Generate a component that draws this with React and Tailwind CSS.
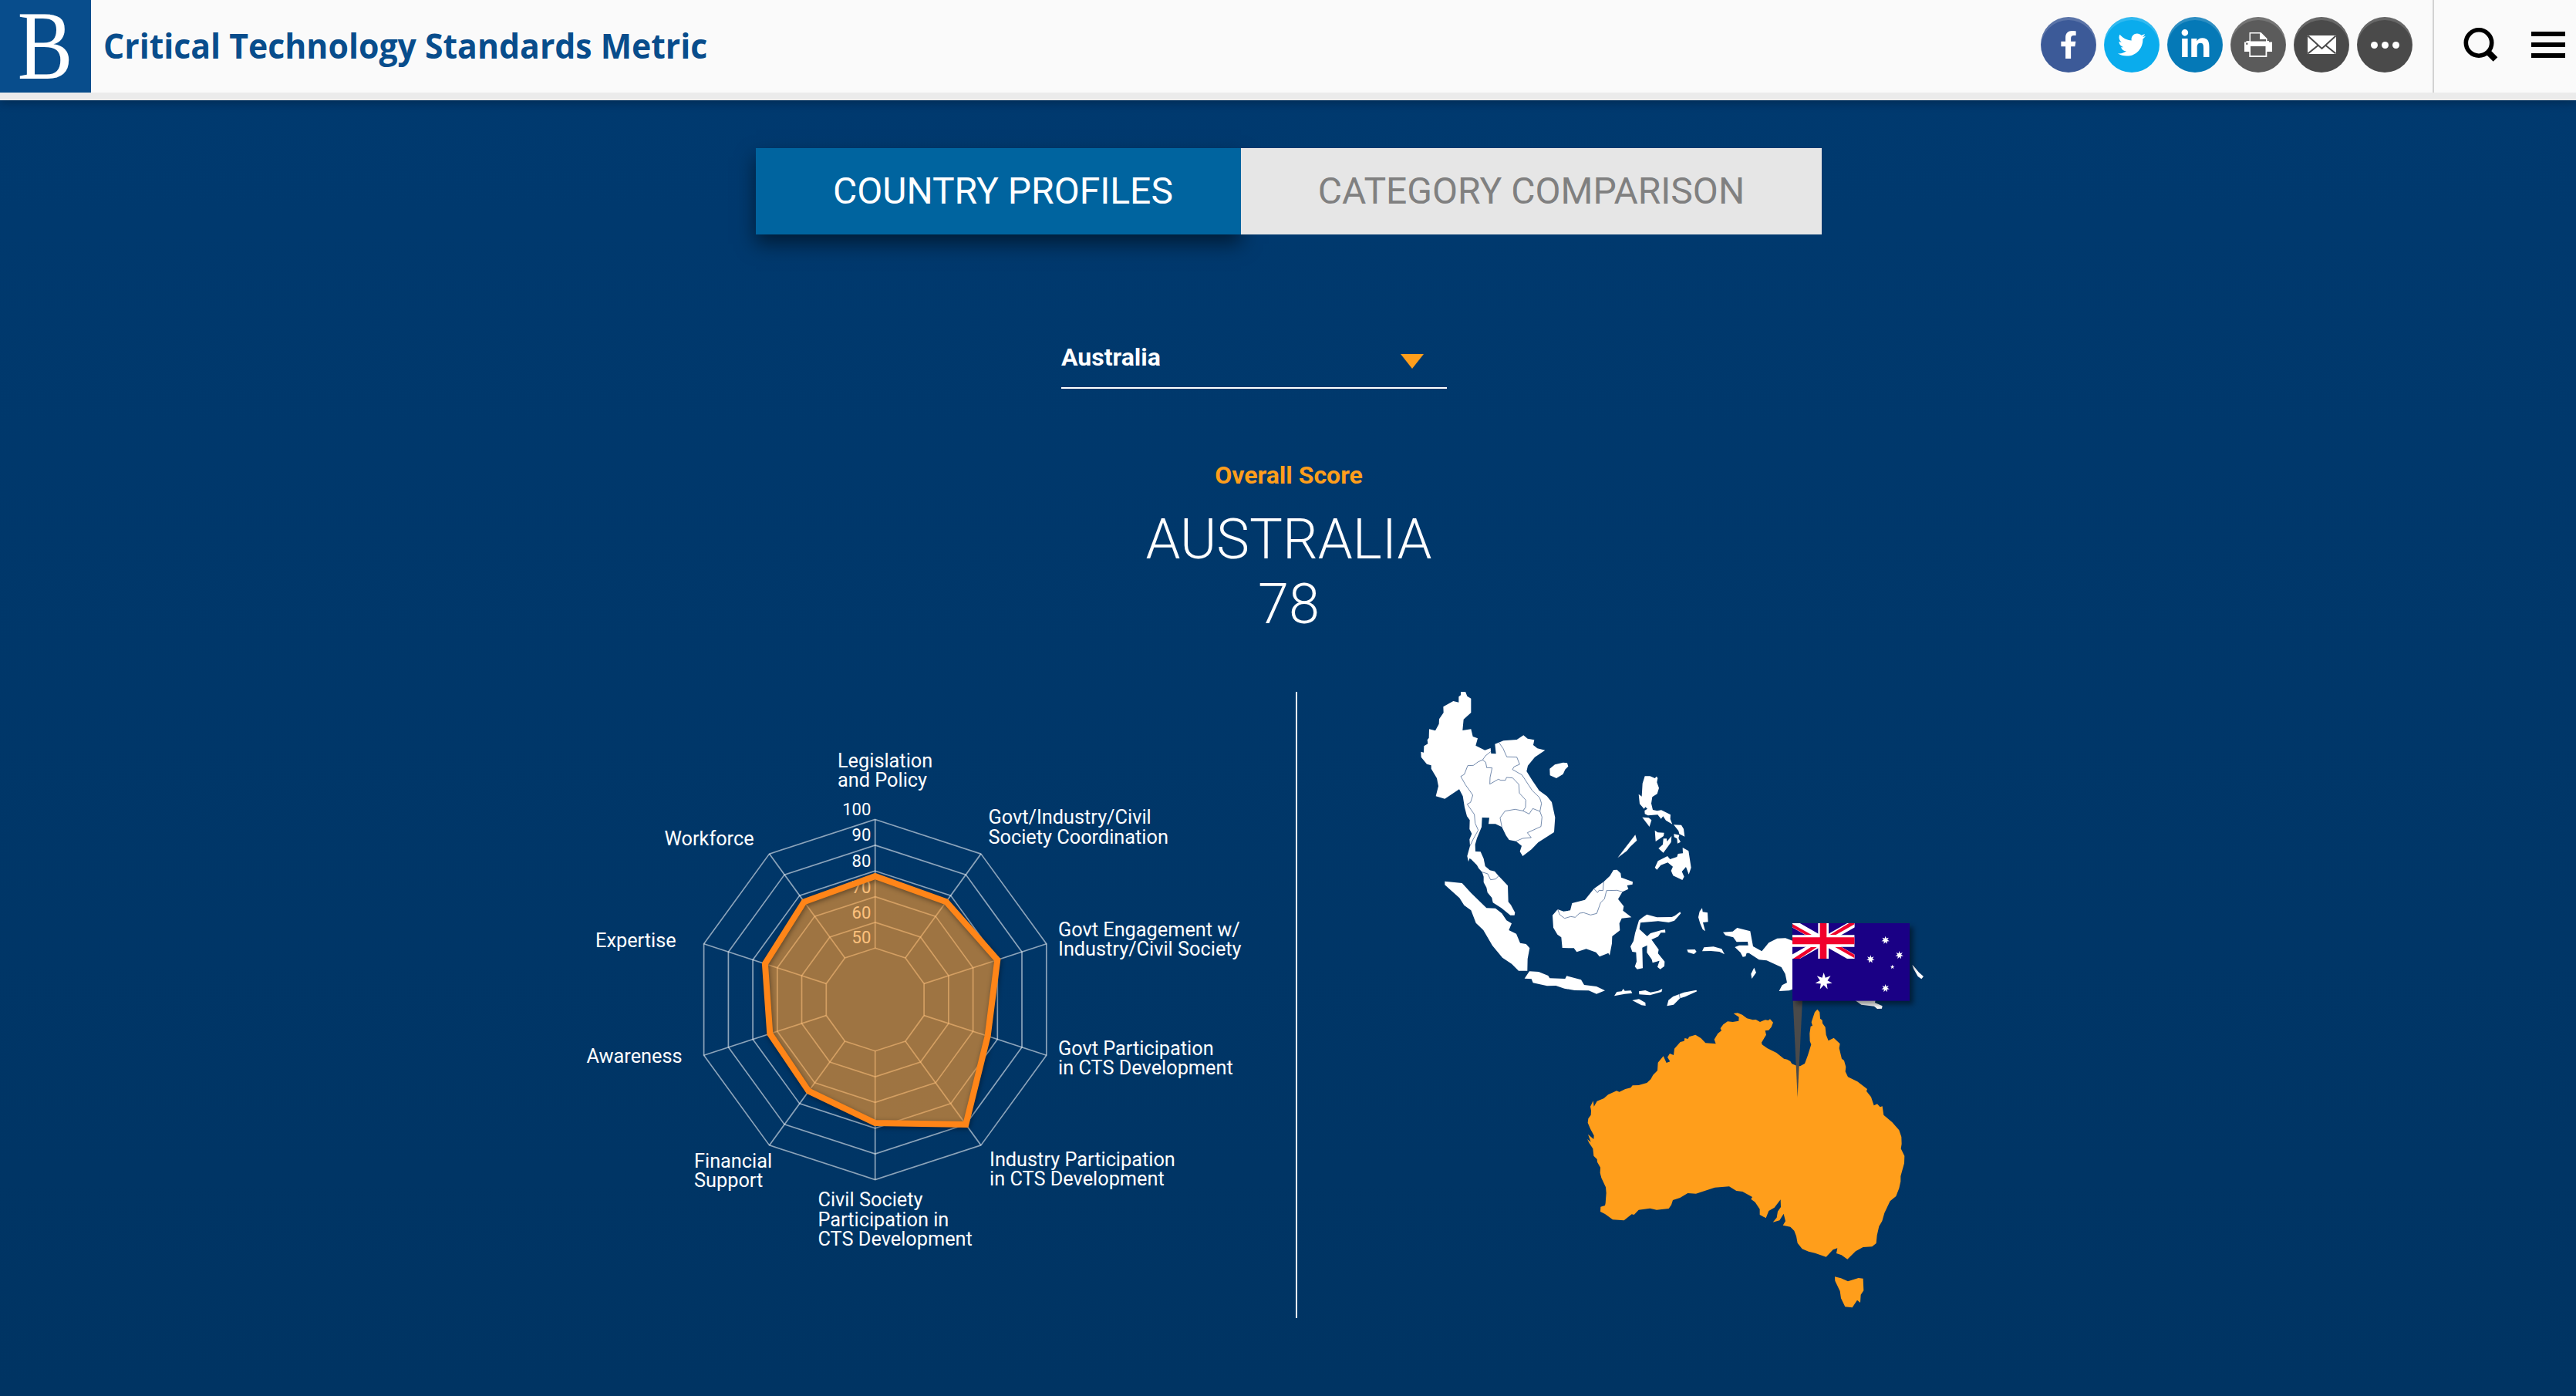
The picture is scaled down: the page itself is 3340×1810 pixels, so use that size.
import React from "react";
import { FaFacebookF, FaTwitter, FaLinkedinIn } from "react-icons/fa";

/* ---------- header ---------- */

const ROUND =
  "flex size-[72px] items-center justify-center rounded-full text-white shadow-[inset_0_4px_0_rgba(255,255,255,0.16)]";

function PrintIcon() {
  return (
    <svg width="36" height="32" viewBox="0 0 36 32" fill="#fff">
      <path d="M0 12.5h2.5V11h4V0h15l8 8v3h2.5v1.5H36V25h-6.700v7H6.300v-7H0zM8 1.500V11.500h20V9h-8V1.500zM8 18v12h19.500V18z" fillRule="evenodd" />
      <circle cx="3.300" cy="14.800" r="1.200" fill="#5b5b5b" />
    </svg>
  );
}

function MailIcon() {
  return (
    <svg width="37" height="24" viewBox="0 0 37 24">
      <rect width="37" height="24" fill="#fff" />
      <path d="M0.500 0.500L18.500 17L36.500 0.500M0.500 23.500L14 12.500M36.500 23.500L23 12.500" fill="none" stroke="#4a4a4a" strokeWidth="2" />
    </svg>
  );
}

function Header() {
  return (
    <header className="relative z-10 flex h-[130px] items-stretch border-b-[10px] border-[#ebebeb] bg-[#fafafa] shadow-[0_2px_12px_rgba(0,0,0,0.3)]">
      <div className="flex w-[118px] items-center justify-center bg-[#084d8c]">
        <span className="origin-center translate-y-[-1px] scale-x-[0.84] font-['Liberation_Serif',serif] text-[128px] leading-[120px] text-white">B</span>
      </div>
      <h1 className="ml-[16px] flex items-center whitespace-nowrap font-['Open_Sans',sans-serif] text-[45px] font-bold text-[#084d8c]">
        <span className="w-[780px] origin-left translate-y-[-1px] scale-x-[0.95]">Critical Technology Standards Metric</span>
      </h1>
      <div className="ml-auto flex items-center gap-[10px] pr-[26px] pb-1">
        <span className={`${ROUND} bg-[#3c5a98]`}><FaFacebookF size={36} /></span>
        <span className={`${ROUND} bg-[#0aaced]`}><FaTwitter size={36} /></span>
        <span className={`${ROUND} bg-[#0579b7]`}><FaLinkedinIn size={41} /></span>
        <span className={`${ROUND} bg-[#5b5b5b]`}><PrintIcon /></span>
        <span className={`${ROUND} bg-[#4a4a4a]`}><MailIcon /></span>
        <span className={`${ROUND} gap-[5px] bg-[#4a4a4a]`}>
          <i className="size-[9px] rounded-full bg-white" />
          <i className="size-[9px] rounded-full bg-white" />
          <i className="size-[9px] rounded-full bg-white" />
        </span>
      </div>
      <div className="flex w-[186px] border-l-2 border-[#d2d2d2] pt-[36px] pl-[38px]">
        <svg width="46" height="46" viewBox="0 0 46 46" fill="none" stroke="#000">
          <circle cx="20" cy="19.500" r="16.700" strokeWidth="5.600" />
          <path d="M31 30.500L41.500 41" strokeWidth="8" />
        </svg>
        <div className="mt-[5px] ml-[42px] flex w-[44px] flex-col gap-2">
          <i className="h-[6px] bg-black" />
          <i className="h-[6px] bg-black" />
          <i className="h-[6px] bg-black" />
        </div>
      </div>
    </header>
  );
}

/* ---------- radar chart ---------- */

const CX = 1134.7;
const CY = 1296;
const radius = (v) => 66.7 + (v - 50) * 3.336;
const point = (r, i) => {
  const a = (i * Math.PI) / 5;
  return `${(CX + r * Math.sin(a)).toFixed(1)},${(CY - r * Math.cos(a)).toFixed(1)}`;
};
const polygon = (radii) => radii.map((r, i) => point(r, i)).join(" ");
const AXES = [0, 1, 2, 3, 4, 5, 6, 7, 8, 9];
const LEVELS = [50, 60, 70, 80, 90, 100];
const SCORES = [78, 77, 80, 76, 90, 78, 74, 73, 75, 77];

const TICKS = [
  [100, 1057], [90, 1090], [80, 1123.5], [70, 1157.5], [60, 1190.5], [50, 1223],
];

const LABELS = [
  [1086, 995, 25, ["Legislation", "and Policy"]],
  [1281.5, 1068, 26, ["Govt/Industry/Civil", "Society Coordination"]],
  [1372, 1213.5, 25, ["Govt Engagement w/", "Industry/Civil Society"]],
  [1372, 1367.700, 25, ["Govt Participation", "in CTS Development"]],
  [1283, 1512, 25, ["Industry Participation", "in CTS Development"]],
  [1060.5, 1564, 25.7, ["Civil Society", "Participation in", "CTS Development"]],
  [900, 1514, 25, ["Financial", "Support"]],
  [760.5, 1378, 25, ["Awareness"]],
  [772, 1228, 25, ["Expertise"]],
  [861.5, 1095.5, 25, ["Workforce"]],
];

function Radar() {
  return (
    <svg width="940" height="812" viewBox="740 897 940 812" fontFamily="Roboto, sans-serif">
      <g fill="none" stroke="#fff" strokeOpacity="0.55" strokeWidth="1.7">
        {LEVELS.map((v) => (
          <polygon key={v} points={polygon(AXES.map(() => radius(v)))} />
        ))}
        {AXES.map((i) => (
          <polyline key={i} points={`${point(radius(50), i)} ${point(radius(100), i)}`} />
        ))}
      </g>
      <g fill="#fff" fontSize="22" textAnchor="end">
        {TICKS.map(([v, y]) => (
          <text key={v} x="1129.3" y={y}>{v}</text>
        ))}
      </g>
      <polygon
        points={polygon(SCORES.map(radius))}
        fill="rgb(255,155,44)"
        fillOpacity="0.62"
        stroke="none"
      />
      <polygon
        points={polygon(SCORES.map(radius))}
        fill="none"
        stroke="#ff8518"
        strokeWidth="8"
        style={{ filter: "drop-shadow(1px 2px 3px rgba(0,0,0,0.4))" }}
      />
      <g fill="#fff" fontSize="25.3">
        {LABELS.map(([x, y, lh, lines]) =>
          lines.map((t, i) => (
            <text key={x + t} x={x} y={y + i * lh}>{t}</text>
          ))
        )}
      </g>
    </svg>
  );
}

/* ---------- map ---------- */

const MAINLAND =
  "222,50 240,50 247,68 262,77 262,132 233,158 229,201 262,196 269,225 288,232 280,260 316,278 338,270 340,291 359,292 355,254 388,241 440,237 466,220 482,233 508,238 504,258 520,271 550,278 510,305 483,338 478,360 500,395 527,435 557,457 576,480 589,540 585,597 523,637 497,664 463,690 452,672 459,650 437,632 410,627 398,610 382,577 357,565 330,565 333,541 305,540 303,577 285,620 278,645 279,672 299,673 311,700 317,729 335,745 354,749 368,766 405,805 407,868 417,880 433,910 431,920 415,920 380,892 347,871 343,852 326,832 322,812 311,792 311,770 305,752 292,738 285,725 262,702 256,699 252,712 247,690 258,650 256,625 265,603 256,585 257,550 246,535 237,500 230,457 216,430 160,467 125,457 135,418 129,387 107,350 107,337 90,332 68,305 67,284 78,287 79,262 94,253 92,238 98,230 99,196 123,202 137,176 138,157 155,132 154,109 193,87 214,92 214,70 222,64";

const MAINLAND_BORDERS = [
  "338,284 318,300 307,316 290,323 271,337 249,338 236,372 222,380 240,412 269,453 260,481 247,488 275,528 278,562 290,589 270,625 258,650",
  "307,316 319,325 323,346 344,347 336,384 335,410 368,391 378,395 396,395 400,384 424,386 448,411 450,445 475,472 474,500 464,514",
  "371,249 387,272 401,304 440,305 451,333 430,342 423,353 460,374 500,435 529,463 536,485 530,516",
  "382,577 375,541 394,515 433,508 464,514 488,526 502,505 530,516 538,538 534,575 481,599 496,618 463,621 437,632",
  "305,752 327,759 338,782 358,779 370,766",
];

const INDONESIA = [
  "160,128 227,135 262,173 322,232 357,233 382,253 400,280 420,292 409,318 438,332 453,368 476,372 490,388 482,430 481,476 447,476 420,449 384,425 345,378 310,318 281,290 262,241 235,221 217,193 160,142",
  "489,478 525,480 562,495 568,505 628,507 634,496 690,511 702,531 750,537 783,553 750,566 720,553 665,552 625,545 592,534 558,535 503,523 497,508 470,506",
  "816,84 830,83 844,97 846,113 891,130 890,140 869,144 874,158 851,169 834,197 856,225 853,242 886,268 848,272 839,292 841,319 811,342 810,370 801,416 796,407 762,421 748,404 710,391 673,403 662,388 617,387 613,346 598,335 582,308 579,260 599,237 622,245 648,241 655,213 705,200 740,157 778,130 802,107",
  "946,257 985,268 1043,267 1055,262 1075,247 1078,253 1053,281 1031,288 990,283 921,289 917,314 947,342 960,330 1002,318 1017,316 1018,328 1000,328 990,343 964,355 992,394 989,408 1015,440 1014,458 998,470 987,461 995,437 968,445 965,432 946,405 947,377 928,386 930,466 908,470 899,460 906,440 904,404 889,402 882,382 894,360 900,330 915,280 930,268",
  "1161,232 1163,247 1182,250 1184,286 1164,288 1173,322 1163,315 1153,292 1146,268 1151,245",
  "1102,394 1133,393 1139,402 1129,411 1106,404",
  "1161,400 1168,385 1205,382 1237,391 1248,412 1228,402 1195,399",
  "819,574 829,558 848,556 854,546 860,554 884,553 889,563 860,566",
  "915,556 940,552 960,560 990,554 1006,546 1003,558 958,571 916,568",
  "889,591 915,586 940,600 941,612 925,610",
  "1024,613 1030,590 1048,576 1090,560 1138,551 1141,556 1095,577 1075,583 1050,608",
];

const INDONESIA_BORDERS = [
  "599,237 607,258 626,272 650,265 667,268 684,252 700,250 727,259 751,253 766,211 781,196 789,164 830,163 851,169",
  "740,157 754,172 760,163 775,164 778,130",
  "1072,567 1075,583",
];

const PACIFIC = [
  "218,79 238,79 257,87 264,80 268,87 265,103 273,125 266,148 247,160 243,185 249,210 266,214 282,211 318,229 317,246 325,266 300,251 289,235 281,245 268,229 230,232 218,226 217,213 228,206 220,199 215,206 198,187 194,149 206,158 209,107",
  "208,239 233,241 244,250 236,276",
  "330,268 360,269 369,284 373,314 352,304 349,292",
  "331,304 352,308 349,320 357,335 345,341 343,322 332,316",
  "257,290 268,298 293,299 291,312 260,333",
  "290,322 303,322 304,333 322,312 320,336 290,377 271,360 288,345",
  "365,357 388,370 398,435 389,461 378,432 362,450 371,470 364,483 328,466 320,447 327,431 307,415 280,425 265,443 257,435 269,409 306,390 316,402 343,393 347,381 366,379",
  "181,307 187,329 160,355 148,370 112,397 140,360",
  "522,686 560,683 577,669 628,682 639,741 673,760 700,727 733,710 765,709 800,722 800,905 780,913 740,915 752,892 771,882 764,848 749,822 692,796 662,793 623,767 614,767 610,780 599,782 590,765 568,744 585,737 620,737 618,723 575,724 562,706 532,698",
  "643,824 651,843 634,867 631,848",
  "1035,950 1115,950 1113,960 1142,973 1140,983 1122,984 1110,974 1060,968",
  "1258,813 1264,818 1284,842 1302,858 1294,868 1280,858 1263,828",
];

const AUSTRALIA =
  "653,72 669,70 687,77 705,91 728,97 740,96 756,105 776,97 788,99 795,94 807,107 800,125 790,137 776,139 780,155 762,185 764,193 785,208 820,225 849,248 862,251 874,258 880,268 900,276 912,277 930,267 942,235 955,193 950,180 949,150 953,122 960,120 956,106 969,67 979,56 988,67 990,92 998,98 999,110 1010,125 1013,155 1022,178 1043,167 1067,190 1064,207 1074,248 1083,255 1090,280 1088,298 1098,319 1135,337 1173,366 1170,374 1188,397 1199,430 1212,424 1223,436 1232,433 1237,467 1270,495 1297,526 1306,552 1307,580 1304,598 1318,626 1317,655 1303,705 1303,725 1297,752 1285,783 1262,802 1240,848 1231,880 1219,900 1211,935 1208,966 1192,979 1157,981 1128,997 1096,1028 1073,1012 1053,1005 1057,985 1040,991 1013,1019 970,1004 945,998 920,988 902,965 897,938 889,917 874,902 845,896 855,880 848,851 832,877 806,884 821,866 825,842 837,825 836,796 812,827 790,840 779,868 755,855 755,833 737,806 721,794 726,786 688,765 664,762 636,745 580,749 507,773 475,771 445,789 417,798 411,817 401,831 354,836 328,830 284,836 266,855 257,853 227,877 183,874 153,852 135,843 136,824 153,819 155,810 158,770 156,748 139,712 134,692 135,671 123,650 122,639 109,626 106,598 92,577 84,561 98,572 87,542 109,561 110,547 97,523 86,497 88,481 98,467 99,450 96,434 107,412 110,434 122,413 149,402 165,388 198,373 209,377 232,366 253,361 260,352 284,351 316,342 331,328 340,311 357,294 359,263 380,238 392,264 406,259 396,242 405,228 420,234 423,209 446,183 461,179 463,168 476,171 480,163 505,155 526,168 544,187 584,190 578,173 592,150 606,139 602,130 613,115 630,103 650,105 673,101 674,86";

const TASMANIA =
  "1047,1096 1071,1102 1098,1114 1139,1101 1157,1103 1159,1150 1148,1166 1146,1197 1134,1187 1115,1216 1087,1213 1071,1180 1067,1152 1048,1112";

const star = (cx, cy, r, n, inner) => {
  const pts = [];
  for (let i = 0; i < n * 2; i++) {
    const rr = i % 2 ? r * inner : r;
    const a = (i * Math.PI) / n;
    pts.push(`${(cx + rr * Math.sin(a)).toFixed(1)},${(cy - rr * Math.cos(a)).toFixed(1)}`);
  }
  return pts.join(" ");
};

function Flag() {
  return (
    <g>
      <rect x="792" y="651" width="456" height="302" fill="#1a0085" style={{ filter: "drop-shadow(14px 14px 10px rgba(0,0,0,0.45))" }} />
      <g clipPath="url(#canton)">
        <path d="M792 651L1034 789M1034 651L792 789" stroke="#fff" strokeWidth="29" />
        <path d="M792 654V667L845 697H868ZM1012 651H1034V655L960 697H937ZM795 789H820L888 743H865ZM957 743H982L1034 774V787Z" fill="#f1002c" />
        <path d="M892 651h41v138h-41zM792 697h242v46H792z" fill="#fff" />
        <path d="M899 651h26v138h-26zM792 706h242v27H792z" fill="#f1002c" />
      </g>
      <g fill="#fff">
        <polygon points={star(914, 877, 34, 7, 0.44)} />
        <polygon points={star(1154, 717, 16, 7, 0.46)} />
        <polygon points={star(1208, 775, 16, 7, 0.46)} />
        <polygon points={star(1096, 791, 16, 7, 0.46)} />
        <polygon points={star(1154, 904, 16, 7, 0.46)} />
        <polygon points={star(1181, 821, 9, 5, 0.42)} />
      </g>
    </g>
  );
}

function RegionMap() {
  return (
    <svg width="918" height="812" viewBox="1682 897 918 812">
      <defs>
        <clipPath id="canton">
          <rect x="792" y="651" width="242" height="138" />
        </clipPath>
      </defs>
      <g transform="translate(1820 880) scale(0.33333)">
        <polygon points={MAINLAND} fill="#fff" />
        <polygon points="568,350 588,334 620,326 636,328 640,341 628,353 620,371 594,387 569,376" fill="#fff" />
        {MAINLAND_BORDERS.map((p) => (
          <polyline key={p} points={p} fill="none" stroke="#2f5285" strokeWidth="2" />
        ))}
      </g>
      <g transform="translate(1820 1100) scale(0.33333)">
        {INDONESIA.map((p) => (
          <polygon key={p} points={p} fill="#fff" />
        ))}
        {INDONESIA_BORDERS.map((p) => (
          <polyline key={p} points={p} fill="none" stroke="#2f5285" strokeWidth="2" />
        ))}
      </g>
      <g transform="translate(2030 1290) scale(0.33333)" fill="#ff9e1b">
        <polygon points={AUSTRALIA} />
        <polygon points={TASMANIA} />
        <polygon points="884,20 921,20 902,400" fill="#4a4a4a" />
      </g>
      <g transform="translate(2060 980) scale(0.33333)">
        {PACIFIC.map((p) => (
          <polygon key={p} points={p} fill="#fff" />
        ))}
        <Flag />
      </g>
    </svg>
  );
}

/* ---------- page ---------- */

export default function App() {
  return (
    <div className="flex h-[1810px] w-[3340px] flex-col overflow-hidden bg-linear-to-b from-[#003a70] to-[#003463] font-['Roboto',sans-serif] text-white">
      <Header />
      <main className="flex flex-col items-center pt-[62px]">
        <nav className="ml-[2px] flex h-[112px] text-[48px] leading-none">
          <button className="w-[629px] bg-[#00649f] pl-[100px] text-left shadow-[0_12px_24px_rgba(0,0,0,0.5)]">COUNTRY PROFILES</button>
          <button className="relative w-[753px] bg-[#e6e6e6] text-center text-[#808080]">CATEGORY COMPARISON</button>
        </nav>
        <div className="mt-[124px] mr-[88px] flex h-[76px] w-[500px] justify-between border-b-2 border-white pt-[16px] pr-[30px] text-[32px] leading-[38px] font-bold">
          <span>Australia</span>
          <svg className="mt-[15px]" width="30" height="19" viewBox="0 0 30 19">
            <path d="M0 0H30L15 19Z" fill="#ff9e1b" />
          </svg>
        </div>
        <h2 className="mt-[93px] ml-[2px] text-[32px] leading-[38px] font-bold text-[#ff9e1b]">Overall Score</h2>
        <div className="mt-[23px] ml-[2px] text-center text-[72px] leading-[84px] font-light">
          <p>AUSTRALIA</p>
          <p>78</p>
        </div>
        <section className="mt-[71px] flex">
          <Radar />
          <div className="w-[2px] bg-white" />
          <RegionMap />
        </section>
      </main>
    </div>
  );
}
